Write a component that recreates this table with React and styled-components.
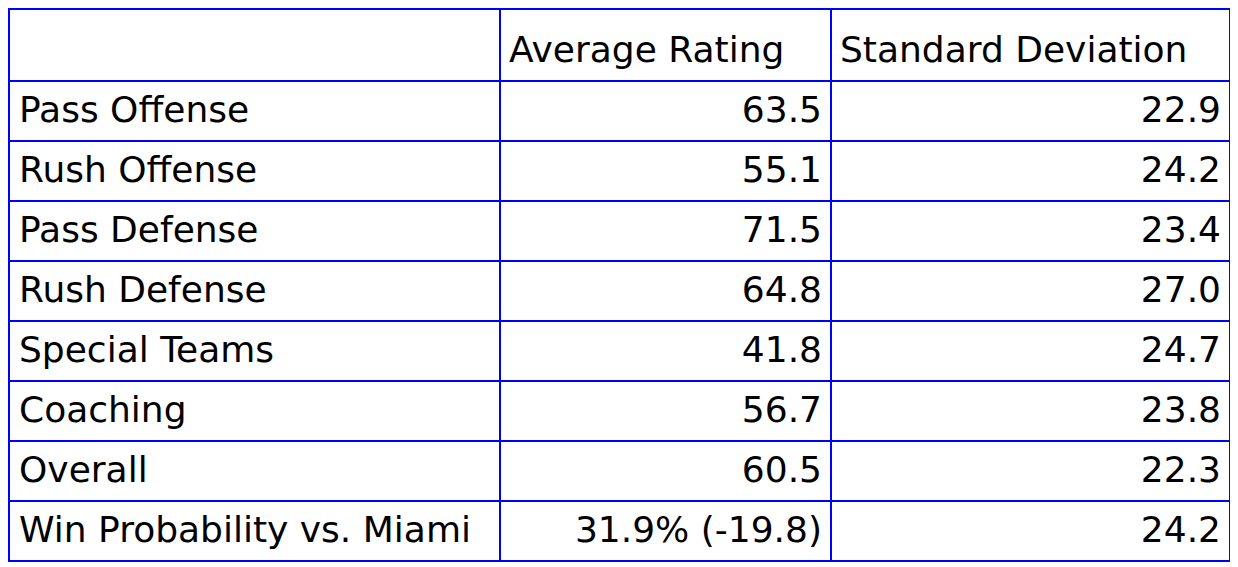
import React from 'react';
import styled, { createGlobalStyle } from 'styled-components';

const GlobalStyle = createGlobalStyle`
  body {
    margin: 8px;
    background: #fff;
    font-family: "DejaVu Sans", Verdana, sans-serif;
  }
`;

const rows = [
  ['Pass Offense', '63.5', '22.9'],
  ['Rush Offense', '55.1', '24.2'],
  ['Pass Defense', '71.5', '23.4'],
  ['Rush Defense', '64.8', '27.0'],
  ['Special Teams', '41.8', '24.7'],
  ['Coaching', '56.7', '23.8'],
  ['Overall', '60.5', '22.3'],
  ['Win Probability vs. Miami', '31.9% (-19.8)', '24.2'],
];

const Table = styled.table`
  border-collapse: separate;
  border-spacing: 0;
  border-top: 2px solid #0000ff;
  border-left: 2px solid #0000ff;
  table-layout: fixed;
  width: 1223px;
  font-size: 36px;
  line-height: 42px;
  color: #000;
`;

const Head = styled.th`
  font-weight: normal;
  text-align: left;
  vertical-align: bottom;
  padding: 19px 8px 9px 8px;
  border-right: 2px solid #0000ff;
  border-bottom: 2px solid #0000ff;
  white-space: nowrap;
`;

const Cell = styled.td`
  text-align: ${p => (p.$num ? 'right' : 'left')};
  padding: 7px 8px 9px 9px;
  border-right: 2px solid #0000ff;
  border-bottom: 2px solid #0000ff;
  white-space: nowrap;
`;

export default function App() {
  return (
    <>
      <GlobalStyle />
      <Table>
        <colgroup>
          <col style={{ width: 491 }} />
          <col style={{ width: 331 }} />
          <col style={{ width: 399 }} />
        </colgroup>
        <thead>
          <tr>
            <Head></Head>
            <Head>Average Rating</Head>
            <Head>Standard Deviation</Head>
          </tr>
        </thead>
        <tbody>
          {rows.map(r => (
            <tr key={r[0]}>
              <Cell>{r[0]}</Cell>
              <Cell $num>{r[1]}</Cell>
              <Cell $num>{r[2]}</Cell>
            </tr>
          ))}
        </tbody>
      </Table>
    </>
  );
}
